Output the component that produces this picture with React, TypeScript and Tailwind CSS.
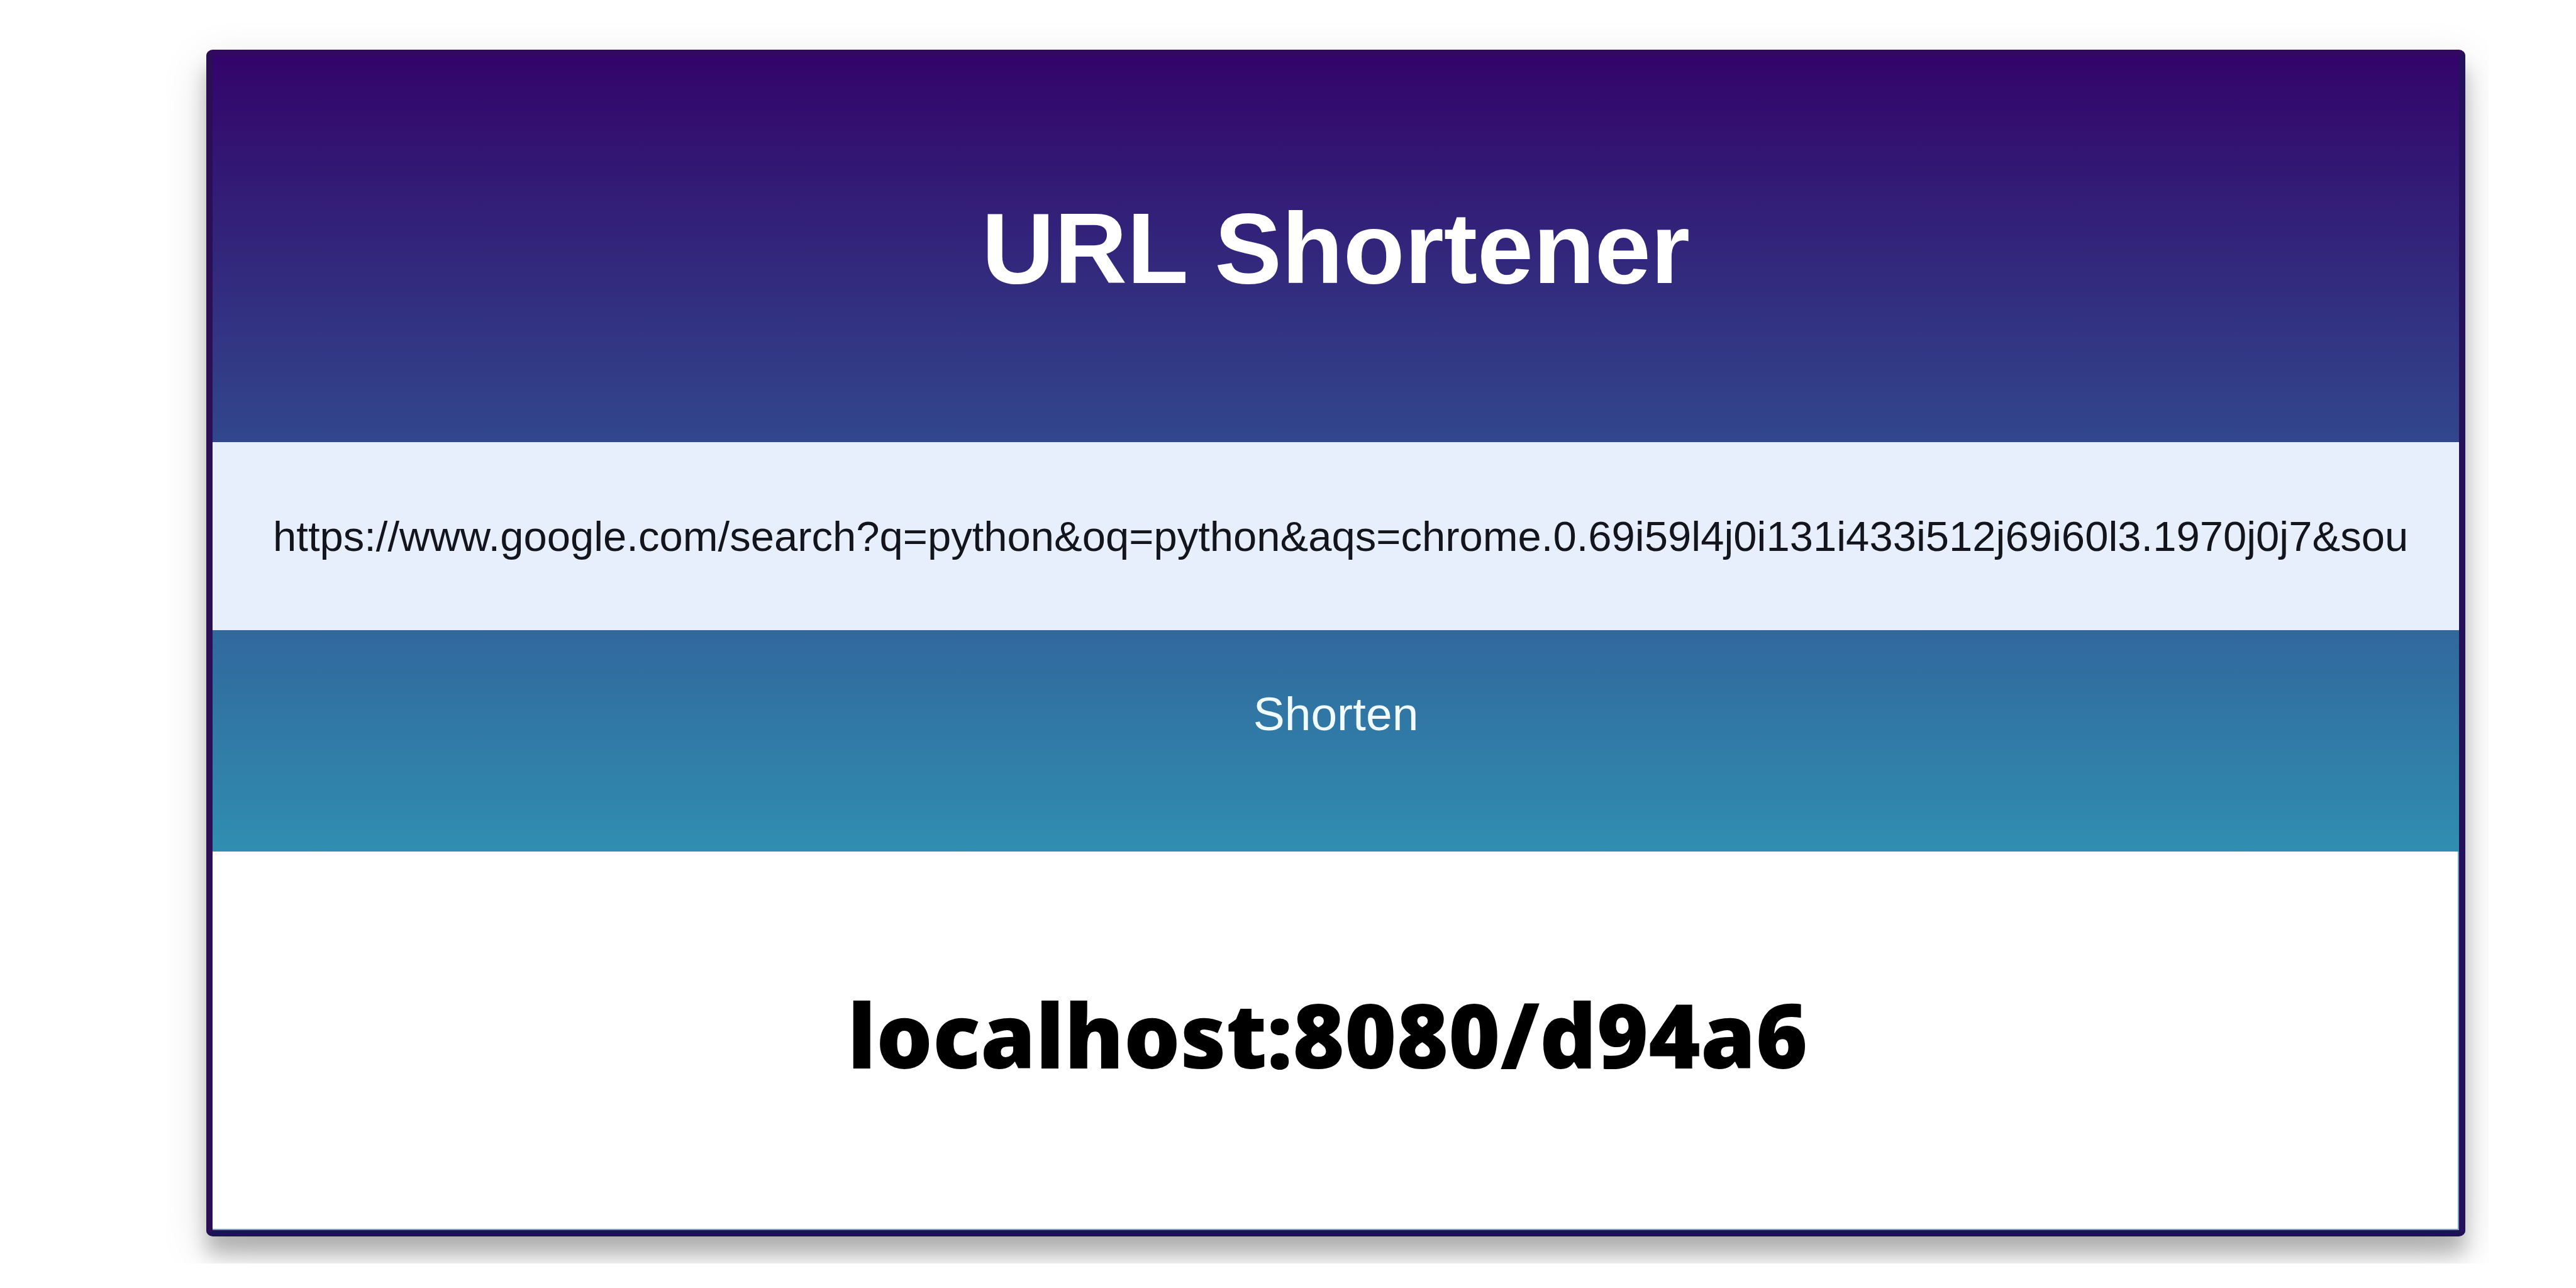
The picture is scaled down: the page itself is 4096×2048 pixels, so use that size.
import { useState } from "react";

const LONG_URL =
  "https://www.google.com/search?q=python&oq=python&aqs=chrome.0.69i59l4j0i131i433i512j69i60l3.1970j0j7&sou";

export default function App() {
  const [url, setUrl] = useState(LONG_URL);

  return (
    <div className="min-h-screen bg-white py-[38px] pl-[265px] pr-[139px] font-['Liberation_Sans',Arial,sans-serif]">
      <main className="overflow-hidden pb-[43px] pl-[63px] pr-[37px] pt-[41px]">
        <div className="overflow-hidden rounded-[10px] border-[10px] border-b-[#1b1352] border-l-[#2c0e54] border-r-[#24115a] border-t-[#320860] shadow-[0_28px_30px_rgba(0,0,0,0.23),0_24px_76px_rgba(0,0,0,0.14)]">
          <form
            className="bg-[linear-gradient(to_bottom,#33046a,#308eb1)] pb-[86px]"
            onSubmit={(event) => event.preventDefault()}
          >
            <h1 className="pb-[228px] pt-[226px] text-center text-[160px] font-bold leading-[160px] text-white">
              URL Shortener
            </h1>
            <input
              type="text"
              aria-label="URL to shorten"
              value={url}
              onChange={(event) => setUrl(event.target.value)}
              className="block w-full bg-[#e7effc] py-[110px] pl-24 pr-16 text-[67px] leading-[79px] text-[#14141c] outline-none"
            />
            <button
              type="submit"
              className="block w-full py-[95px] text-center text-[75px] leading-[76px] text-[#f0fcff]"
            >
              Shorten
            </button>
          </form>
          <output className="block border-b-2 border-r-2 border-[#7c9cc8] bg-white pb-[240px] pr-6 pt-[220px] text-center font-['Open_Sans',sans-serif] text-[141px] font-extrabold leading-[140px] text-black">
            localhost:8080/d94a6
          </output>
        </div>
      </main>
    </div>
  );
}
